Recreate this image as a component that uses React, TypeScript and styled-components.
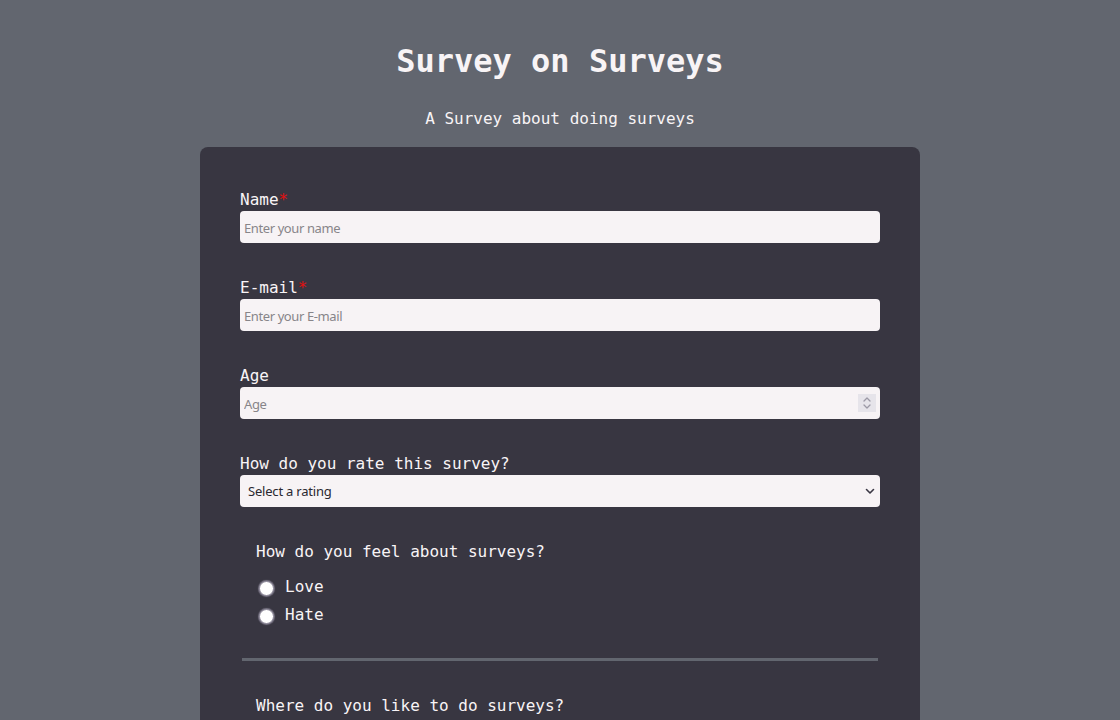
import React from "react";
import styled, { createGlobalStyle } from "styled-components";

const GlobalStyle = createGlobalStyle`
  html, body {
    margin: 0;
    padding: 0;
    background: #62666f;
  }
  body {
    font-family: "DejaVu Sans Mono", "Liberation Mono", monospace;
    color: #f8f4f6;
  }
  * { box-sizing: border-box; }
`;

const Page = styled.main`
  display: flex;
  flex-direction: column;
  align-items: center;
  padding: 42px 0 60px;
`;

const Title = styled.h1`
  margin: 0;
  font-size: 32px;
  line-height: 38px;
  font-weight: bold;
  text-align: center;
`;

const Subtitle = styled.p`
  margin: 29px 0 0;
  font-size: 16px;
  line-height: 19px;
  text-align: center;
`;

const Card = styled.form`
  margin-top: 19px;
  width: 720px;
  background: #383641;
  border-radius: 8px;
  padding: 43px 40px 48px;
  display: flex;
  flex-direction: column;
`;

const Field = styled.div`
  display: flex;
  flex-direction: column;
  gap: 2px;
  margin-bottom: 35px;
`;

const Label = styled.label`
  font-size: 16px;
  line-height: 19px;
`;

const Required = styled.span`
  color: #e01010;
`;

const Control = styled.div`
  position: relative;
  width: 100%;
`;

const TextInput = styled.input`
  display: block;
  height: 32px;
  width: 100%;
  border: none;
  border-radius: 4px;
  background: #f7f3f5;
  padding: 1px 4px 0;
  color: #222;
  font-size: 13px;
  letter-spacing: -0.4px;
  font-family: "Noto Sans", "Open Sans", sans-serif;
  -moz-appearance: textfield;
  &::placeholder {
    color: #878589;
  }
  &::-webkit-inner-spin-button,
  &::-webkit-outer-spin-button {
    -webkit-appearance: none;
    margin: 0;
  }
  &:focus { outline: none; }
`;

const Spinner = styled.span`
  position: absolute;
  right: 4px;
  top: 7px;
  width: 18px;
  height: 18px;
  background: #e6e4ea;
  display: flex;
  align-items: center;
  justify-content: center;
  pointer-events: none;
`;

const Select = styled.select`
  display: block;
  appearance: none;
  -webkit-appearance: none;
  height: 32px;
  width: 100%;
  border: none;
  border-radius: 4px;
  background: #f7f3f5;
  padding: 0 8px;
  color: #2a2830;
  font-size: 13px;
  letter-spacing: -0.2px;
  font-family: "Noto Sans", "Open Sans", sans-serif;
  &:focus { outline: none; }
`;

const Chevron = styled.span`
  position: absolute;
  right: 5px;
  top: 13px;
  width: 10px;
  height: 7px;
  display: flex;
  pointer-events: none;
`;

const Group = styled.fieldset`
  border: none;
  margin: 0;
  padding: 0 16px;
  display: flex;
  flex-direction: column;
`;

const GroupTitle = styled.legend`
  padding: 0;
  font-size: 16px;
  line-height: 19px;
  margin-bottom: 11px;
`;

const OptionRow = styled.label`
  display: flex;
  align-items: center;
  height: 28px;
  font-size: 16px;
  gap: 11px;
`;

const Radio = styled.input`
  appearance: none;
  margin: 4px 0 0 3px;
  width: 15px;
  height: 15px;
  border-radius: 50%;
  background: #ffffff;
  border: 1px solid #8d8898;
  box-shadow: 0 0 1px 1px rgba(160, 155, 175, 0.6);
`;

const Check = styled.input`
  appearance: none;
  margin: 4px 0 0 3px;
  width: 15px;
  height: 15px;
  border-radius: 3px;
  background: #ffffff;
  border: 1px solid #8d8898;
`;

const Divider = styled.hr`
  margin: 30px 2px 35px;
  border: none;
  height: 3px;
  background: #62666f;
`;

const TextArea = styled.textarea`
  width: 100%;
  height: 110px;
  border: none;
  border-radius: 4px;
  background: #f7f3f5;
  padding: 6px 4px;
  font-size: 13px;
  font-family: "Noto Sans", "Open Sans", sans-serif;
  resize: vertical;
  &::placeholder { color: #878589; }
`;

const Submit = styled.button`
  align-self: stretch;
  height: 40px;
  border: none;
  border-radius: 4px;
  background: #62666f;
  color: #f8f4f6;
  font-family: "DejaVu Sans Mono", monospace;
  font-size: 16px;
  font-weight: bold;
  cursor: pointer;
`;

export default function App() {
  return (
    <>
      <GlobalStyle />
      <Page>
        <Title id="title">Survey on Surveys</Title>
        <Subtitle id="description">A Survey about doing surveys</Subtitle>
        <Card id="survey-form">
          <Field>
            <Label htmlFor="name">
              Name<Required>*</Required>
            </Label>
            <TextInput id="name" type="text" placeholder="Enter your name" />
          </Field>
          <Field>
            <Label htmlFor="email">
              E-mail<Required>*</Required>
            </Label>
            <TextInput id="email" type="email" placeholder="Enter your E-mail" />
          </Field>
          <Field>
            <Label htmlFor="number">Age</Label>
            <Control>
              <TextInput id="number" type="number" placeholder="Age" />
              <Spinner>
                <svg width="10" height="14" viewBox="0 0 10 14" fill="none" stroke="#9c99a6" strokeWidth="1.3" strokeLinecap="round" strokeLinejoin="round">
                  <path d="M2 5 L5 2 L8 5" />
                  <path d="M2 9 L5 12 L8 9" />
                </svg>
              </Spinner>
            </Control>
          </Field>
          <Field>
            <Label htmlFor="dropdown">How do you rate this survey?</Label>
            <Control>
              <Select id="dropdown" defaultValue="">
                <option value="" disabled>
                  Select a rating
                </option>
                <option value="1">1</option>
                <option value="2">2</option>
                <option value="3">3</option>
                <option value="4">4</option>
                <option value="5">5</option>
              </Select>
              <Chevron>
                <svg width="10" height="7" viewBox="0 0 10 7" fill="none" stroke="#3a3744" strokeWidth="1.6" strokeLinecap="round" strokeLinejoin="round">
                  <path d="M1.5 1.5 L5 5 L8.5 1.5" />
                </svg>
              </Chevron>
            </Control>
          </Field>
          <Group>
            <GroupTitle>How do you feel about surveys?</GroupTitle>
            <OptionRow>
              <Radio type="radio" name="feel" value="love" />
              Love
            </OptionRow>
            <OptionRow>
              <Radio type="radio" name="feel" value="hate" />
              Hate
            </OptionRow>
          </Group>
          <Divider />
          <Group>
            <GroupTitle>Where do you like to do surveys?</GroupTitle>
            <OptionRow>
              <Check type="checkbox" value="home" />
              Home
            </OptionRow>
            <OptionRow>
              <Check type="checkbox" value="work" />
              Work
            </OptionRow>
            <OptionRow>
              <Check type="checkbox" value="school" />
              School
            </OptionRow>
            <OptionRow>
              <Check type="checkbox" value="anywhere" />
              Anywhere
            </OptionRow>
          </Group>
          <Divider />
          <Field>
            <Label htmlFor="comments">Any comments?</Label>
            <TextArea id="comments" placeholder="Enter your comments here..." />
          </Field>
          <Submit type="submit" id="submit">
            Submit
          </Submit>
        </Card>
      </Page>
    </>
  );
}
